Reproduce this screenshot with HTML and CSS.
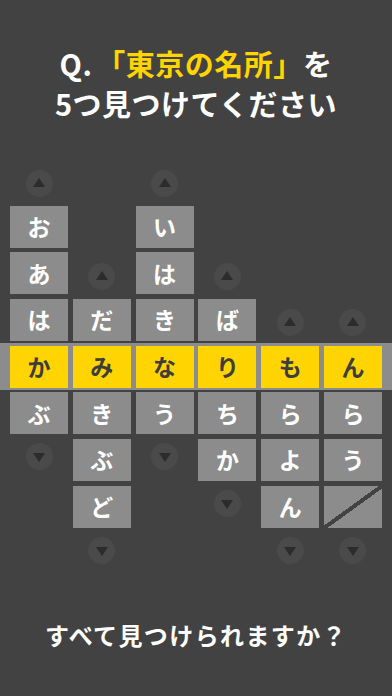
FILE: index.html
```html
<!DOCTYPE html>
<html lang="ja">
<head>
<meta charset="utf-8">
<link rel="stylesheet" href="styles.css">
</head>
<body>
<div class="screen">
  <h1 class="title">
    <span class="line">Q.<span class="hl">「東京の名所」</span>を</span>
    <span class="line">5つ見つけてください</span>
  </h1>

  <div class="board">
    <div class="band"></div>

    <!-- column 1 -->
    <div class="arrow up c1 r0"></div>
    <div class="tile c1 r1">お</div>
    <div class="tile c1 r2">あ</div>
    <div class="tile c1 r3">は</div>
    <div class="tile on c1 r4">か</div>
    <div class="tile c1 r5">ぶ</div>
    <div class="arrow down c1 r6"></div>

    <!-- column 2 -->
    <div class="arrow up c2 r2"></div>
    <div class="tile c2 r3">だ</div>
    <div class="tile on c2 r4">み</div>
    <div class="tile c2 r5">き</div>
    <div class="tile c2 r6">ぶ</div>
    <div class="tile c2 r7">ど</div>
    <div class="arrow down c2 r8"></div>

    <!-- column 3 -->
    <div class="arrow up c3 r0"></div>
    <div class="tile c3 r1">い</div>
    <div class="tile c3 r2">は</div>
    <div class="tile c3 r3">き</div>
    <div class="tile on c3 r4">な</div>
    <div class="tile c3 r5">う</div>
    <div class="arrow down c3 r6"></div>

    <!-- column 4 -->
    <div class="arrow up c4 r2"></div>
    <div class="tile c4 r3">ば</div>
    <div class="tile on c4 r4">り</div>
    <div class="tile c4 r5">ち</div>
    <div class="tile c4 r6">か</div>
    <div class="arrow down c4 r7"></div>

    <!-- column 5 -->
    <div class="arrow up c5 r3"></div>
    <div class="tile on c5 r4">も</div>
    <div class="tile c5 r5">ら</div>
    <div class="tile c5 r6">よ</div>
    <div class="tile c5 r7">ん</div>
    <div class="arrow down c5 r8"></div>

    <!-- column 6 -->
    <div class="arrow up c6 r3"></div>
    <div class="tile on c6 r4">ん</div>
    <div class="tile c6 r5">ら</div>
    <div class="tile c6 r6">う</div>
    <div class="tile blank c6 r7"></div>
    <div class="arrow down c6 r8"></div>
  </div>

  <p class="footer">すべて見つけられますか？</p>
</div>
</body>
</html>
```

FILE: styles.css
```css
html, body {
  margin: 0;
  padding: 0;
  background: #424242;
}

.screen {
  width: 392px;
  height: 696px;
  overflow: hidden;
  background: #424242;
  font-family: "Noto Sans CJK JP", "Noto Sans", sans-serif;
  color: #ffffff;
}

.title {
  margin: 0;
  padding-top: 43px;
  font-size: 29px;
  font-weight: 700;
  line-height: 40px;
  text-align: center;
  letter-spacing: 0.5px;
}

.title .line {
  display: block;
}

.title .hl {
  color: #ffd400;
  margin-left: 4px;
}

.board {
  margin: 36px 0 0 10px;
  display: grid;
  grid-template-columns: repeat(6, 58px);
  grid-template-rows: repeat(9, 42px);
  column-gap: 4.8px;
  row-gap: 4.67px;
  position: relative;
}

.band {
  grid-column: 1 / -1;
  grid-row: 5;
  margin: -3px -10px -2px -10px;
  background: #8c8c8c;
}

.tile {
  background: #8c8c8c;
  color: #ffffff;
  font-size: 23px;
  font-weight: 700;
  display: flex;
  align-items: center;
  justify-content: center;
  line-height: 1;
  position: relative;
}

.tile.on {
  background: #ffd400;
  color: #3d3d3d;
}

.tile.blank {
  background: linear-gradient(to bottom right,
    #8c8c8c calc(50% - 2px),
    #424242 calc(50% - 2px),
    #424242 calc(50% + 2px),
    #8c8c8c calc(50% + 2px));
}

.arrow {
  width: 27px;
  height: 27px;
  border-radius: 50%;
  background: #4a4a4a;
  justify-self: center;
  display: flex;
  align-items: center;
  justify-content: center;
}

.arrow.up {
  align-self: end;
  margin-bottom: 4.5px;
}

.arrow.down {
  align-self: start;
  margin-top: 4.5px;
}

.arrow::before {
  content: "";
  width: 0;
  height: 0;
  border-left: 6px solid transparent;
  border-right: 6px solid transparent;
}

.arrow.up::before {
  border-bottom: 9px solid #2c2c2c;
  margin-top: -2px;
}

.arrow.down::before {
  border-top: 9px solid #2c2c2c;
  margin-top: 2px;
}

.c1 { grid-column: 1; }
.c2 { grid-column: 2; }
.c3 { grid-column: 3; }
.c4 { grid-column: 4; }
.c5 { grid-column: 5; }
.c6 { grid-column: 6; }

.r0 { grid-row: 1; }
.r1 { grid-row: 2; }
.r2 { grid-row: 3; }
.r3 { grid-row: 4; }
.r4 { grid-row: 5; }
.r5 { grid-row: 6; }
.r6 { grid-row: 7; }
.r7 { grid-row: 8; }
.r8 { grid-row: 9; }

.footer {
  margin: 46px 0 0 0;
  font-size: 24px;
  font-weight: 700;
  line-height: 30px;
  text-align: center;
  letter-spacing: 1.4px;
}
```
